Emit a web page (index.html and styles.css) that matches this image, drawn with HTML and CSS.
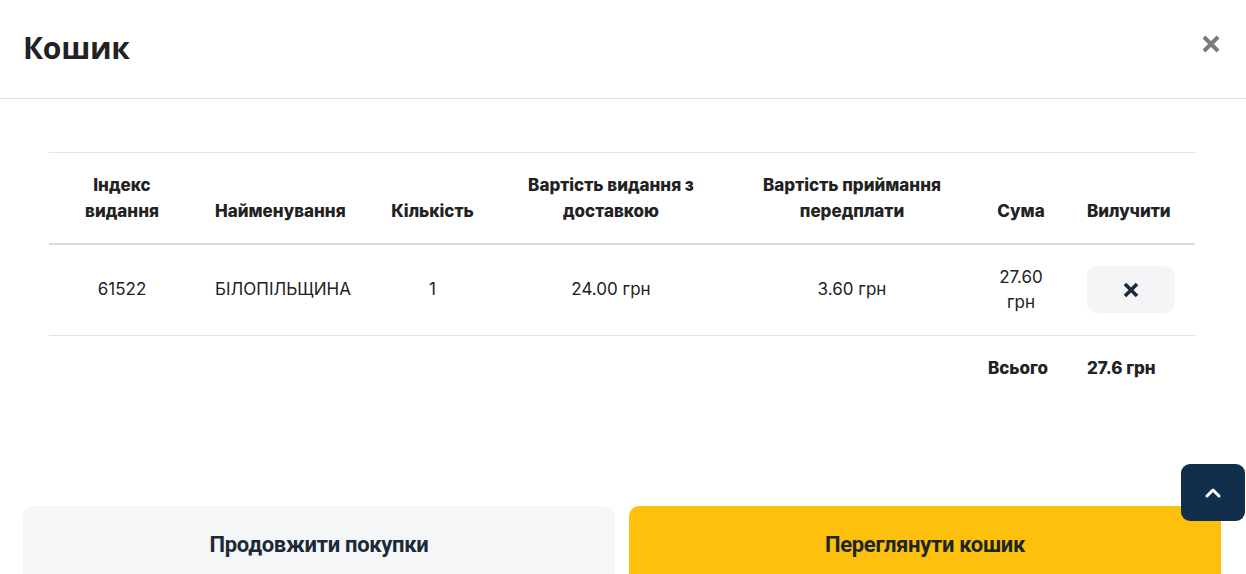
FILE: index.html
```html
<!DOCTYPE html>
<html lang="uk">
<head>
<meta charset="utf-8">
<title>Кошик</title>
<link rel="stylesheet" href="styles.css">
</head>
<body>
<div class="modal">
  <header class="modal-header">
    <h1 class="modal-title">Кошик</h1>
    <button class="close-btn" aria-label="Закрити">
      <svg width="20" height="20" viewBox="0 0 20 20"><path d="M3 3 L17 17 M17 3 L3 17" stroke="#7a7a7a" stroke-width="4" stroke-linecap="butt"/></svg>
    </button>
  </header>
  <main class="modal-body">
    <table class="cart-table">
      <colgroup>
        <col class="c1"><col class="c2"><col class="c3"><col class="c4"><col class="c5"><col class="c6"><col class="c7">
      </colgroup>
      <thead>
        <tr>
          <th class="center">Індекс<br>видання</th>
          <th class="left">Найменування</th>
          <th class="center">Кількість</th>
          <th class="center">Вартість видання з<br>доставкою</th>
          <th class="center">Вартість приймання<br>передплати</th>
          <th class="center">Сума</th>
          <th class="left">Вилучити</th>
        </tr>
      </thead>
      <tbody>
        <tr class="item-row">
          <td class="center">61522</td>
          <td class="left">БІЛОПІЛЬЩИНА</td>
          <td class="center">1</td>
          <td class="center">24.00 грн</td>
          <td class="center">3.60 грн</td>
          <td class="center">27.60<br>грн</td>
          <td class="left">
            <button class="remove-btn" aria-label="Вилучити">
              <svg width="16" height="16" viewBox="0 0 16 16"><path d="M2 2 L14 14 M14 2 L2 14" stroke="#1b2b3c" stroke-width="3.6"/></svg>
            </button>
          </td>
        </tr>
        <tr class="total-row">
          <td></td><td></td><td></td><td></td><td></td>
          <td class="total-label">Всього</td>
          <td class="left total-value">27.6 грн</td>
        </tr>
      </tbody>
    </table>
  </main>
  <footer class="modal-footer">
    <button class="btn btn-light">Продовжити покупки</button>
    <button class="btn btn-yellow">Переглянути кошик</button>
  </footer>
</div>
<button class="scroll-top" aria-label="Вгору">
  <svg width="18" height="12" viewBox="0 0 18 12"><path d="M3 9 L9 3 L15 9" fill="none" stroke="#ffffff" stroke-width="3" stroke-linecap="round" stroke-linejoin="round"/></svg>
</button>
</body>
</html>
```
FILE: styles.css
```css
* { box-sizing: border-box; }
html, body { margin: 0; padding: 0; background: #ffffff; }
body {
  font-family: Inter, "Noto Sans", sans-serif;
  color: #222;
  width: 1246px;
  height: 574px;
  overflow: hidden;
}
.modal { display: flex; flex-direction: column; }
.modal-header {
  height: 99px;
  display: flex;
  align-items: center;
  justify-content: space-between;
  padding: 0 24px 4px 23px;
  border-bottom: 1px solid #dedede;
}
.modal-title {
  margin: 0;
  font-family: "Open Sans", "Noto Sans", sans-serif;
  font-weight: 700;
  font-size: 30px;
  color: #222;
  letter-spacing: -0.3px;
}
.close-btn {
  border: 0;
  background: transparent;
  padding: 0;
  width: 22px;
  height: 22px;
  display: flex;
  align-items: center;
  justify-content: center;
  margin-top: -6px;
}
.modal-body { padding: 53px 51px 0 49px; }
.cart-table {
  width: 100%;
  border-collapse: collapse;
  table-layout: fixed;
  font-size: 17px;
}
.c1 { width: 146px; }
.c2 { width: 180px; }
.c3 { width: 115px; }
.c4 { width: 242px; }
.c5 { width: 240px; }
.c6 { width: 98px; }
.c7 { width: 125px; }
.cart-table thead tr { border-top: 1px solid #e4e4e4; border-bottom: 2px solid #dcdcdc; }
.cart-table th {
  font-weight: 800;
  line-height: 26px;
  padding: 19px 0 19px;
  vertical-align: bottom;
  color: #222;
  white-space: nowrap;
}
.cart-table td {
  font-weight: 400;
  line-height: 25px;
  vertical-align: middle;
  color: #222;
  padding: 0;
}
.item-row { height: 91px; border-bottom: 1px solid #e2e2e2; }
.center { text-align: center; }
.left { text-align: left; }
th.left, td.left { padding-left: 17px !important; }
.cart-table th:nth-child(2), .cart-table td:nth-child(2) { padding-left: 20px !important; }
.remove-btn {
  width: 88px;
  height: 47px;
  border: 0;
  border-radius: 10px;
  background: #f3f5f7;
  display: flex;
  align-items: center;
  justify-content: center;
  margin-top: 0;
}
.total-row td { padding-top: 20px; font-weight: 800; }
.total-label { text-align: right; padding-right: 22px !important; }
.modal-footer {
  display: flex;
  gap: 14px;
  padding: 125px 25px 0 23px;
}
.btn {
  flex: 1;
  height: 76px;
  border: 0;
  border-radius: 10px 10px 0 0;
  font-family: Roboto, "Noto Sans", sans-serif;
  font-weight: 700;
  font-size: 22px;
  letter-spacing: -0.3px;
  color: #1b2a38;
  padding-bottom: 0;
}
.btn-light { background: #f5f6f8; }
.btn-yellow { background: #fdc10d; color: #1e2620; }
.scroll-top {
  position: fixed;
  top: 464px;
  right: 1px;
  width: 64px;
  height: 57px;
  border: 0;
  border-radius: 9px;
  background: #112f4b;
  display: flex;
  align-items: center;
  justify-content: center;
}
```
